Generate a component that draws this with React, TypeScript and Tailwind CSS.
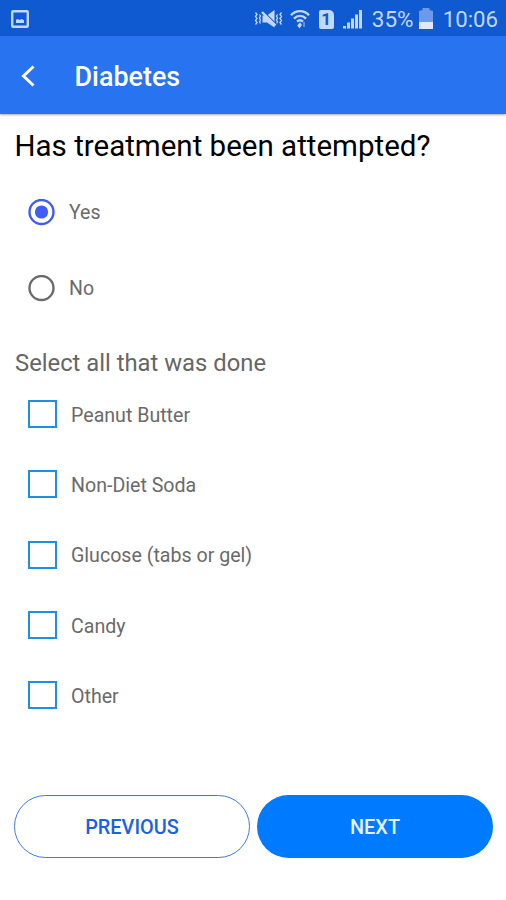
import React, { useState } from "react";

const treatments = [
  "Peanut Butter",
  "Non-Diet Soda",
  "Glucose (tabs or gel)",
  "Candy",
  "Other",
];

const StatusBar: React.FC = () => (
  <div className="flex h-9 items-center bg-[#0f59d1] pl-[11px] pr-[8px] text-[#c3d8fb]">
    <svg className="mt-[2px]" width="18" height="18" viewBox="0 0 18 18" fill="none">
      <rect x="1.2" y="1.2" width="15.6" height="15.6" rx="1" stroke="currentColor" strokeWidth="2.4" />
      <path d="M5 13V9.8l2-.8 1.5 1 2.2-1 2.3 1.2V13z" fill="currentColor" />
    </svg>

    <div className="ml-auto flex items-center pt-[2px]">
      {/* sound off, vibrate */}
      <svg width="29" height="20" viewBox="0 0 29 20" fill="none" stroke="currentColor">
        <path d="M1.5 3.5L3 5.5l-1.5 2L3 9.5l-1.5 2L3 13.5l-1.5 2M5.5 5.5L6.5 7l-1 2 1 2-1 2 1 1.5" strokeWidth="1.3" />
        <path d="M27.5 3.5L26 5.5l1.5 2-1.5 2 1.5 2-1.5 2 1.5 2M23.5 5.5L22.5 7l1 2-1 2 1 2-1 1.5" strokeWidth="1.3" />
        <path d="M8.5 6.500H13l7.500-5.500v17.500L13 13.500H8.500z" fill="currentColor" stroke="none" />
        <path d="M9.500 2.500L23 16" stroke="#0f59d1" strokeWidth="1.2" />
        <path d="M8 3L21.500 16.500" strokeWidth="2.4" />
      </svg>

      {/* wifi */}
      <svg className="ml-[7px]" width="20" height="20" viewBox="0 0 20 20" fill="none" stroke="currentColor" strokeWidth="2.4">
        <path d="M1 6.200C6 .8 14 .8 19 6.200M4 9.600c3.500-3.600 8.500-3.600 12 0M7 12.700c1.800-1.700 4.200-1.700 6 0" />
        <path d="M10 13.300l2 2.700L9.500 19.500l-2.300-3z" fill="currentColor" stroke="none" />
        <path d="M14 13v5" strokeWidth="1.5" opacity="0.6" />
      </svg>

      {/* sim slot */}
      <span className="ml-[9px] flex h-[19px] w-[15px] items-center justify-center rounded-[2px] rounded-tr-[5px] bg-[#c3d8fb] text-[17px] leading-none font-bold text-[#0f59d1]">
        1
      </span>

      {/* mobile signal */}
      <svg className="ml-[9px]" width="20" height="20" viewBox="0 0 20 20" fill="currentColor">
        <path d="M0 17h3v2.500H0zM4 13.500h3v6H4zM8 9.500h3v10H8zM12 5.500h3v14h-3zM16 1h3v18.500h-3z" />
      </svg>

      <span className="ml-[9px] w-[43px] pt-px text-[22.5px] leading-none whitespace-nowrap">35%</span>

      {/* battery */}
      <svg className="ml-[4px] -mt-px" width="14" height="21" viewBox="0 0 14 21">
        <path d="M0 3l3.500-1V0h7v2L14 3v11H0z" fill="#6c9ae9" />
        <path d="M0 14h14v7H0z" fill="#dce8fd" />
      </svg>

      <span className="ml-[10px] pt-px text-[22.2px] leading-none whitespace-nowrap">10:06</span>
    </div>
  </div>
);

type OptionProps = {
  label: string;
  checked: boolean;
  onSelect: () => void;
};

const RadioOption: React.FC<OptionProps> = ({ label, checked, onSelect }) => (
  <button
    type="button"
    role="radio"
    aria-checked={checked}
    onClick={onSelect}
    className="flex h-[76px] items-center pl-[13px] text-[19.5px] text-[#6a6a6a]"
  >
    <svg width="27" height="27" viewBox="0 0 27 27" className={checked ? "text-[#3f5cf5]" : "text-[#6b6b6b]"}>
      <circle cx="13.5" cy="13" r="12" fill="none" stroke="currentColor" strokeWidth="2.4" />
      {checked && <circle cx="13.5" cy="13" r="6.6" fill="currentColor" />}
    </svg>
    <span className="ml-[14px] pt-[2px]">{label}</span>
  </button>
);

const CheckboxOption: React.FC<OptionProps> = ({ label, checked, onSelect }) => (
  <button
    type="button"
    role="checkbox"
    aria-checked={checked}
    onClick={onSelect}
    className="flex h-[70.3px] items-center pl-[13px] text-[19.6px] text-[#6a6a6a]"
  >
    <span
      className={`h-[28px] w-[29px] border-2 border-[#218fdf] ${checked ? "bg-[#218fdf]" : "bg-white"}`}
    />
    <span className="ml-[14px] pt-[3px] whitespace-nowrap">{label}</span>
  </button>
);

const App: React.FC = () => {
  const [attempted, setAttempted] = useState<boolean>(true);
  const [selected, setSelected] = useState<string[]>([]);

  const toggleTreatment = (name: string) => {
    setSelected((prev) =>
      prev.includes(name) ? prev.filter((item) => item !== name) : [...prev, name]
    );
  };

  return (
    <div className="flex h-[900px] w-[506px] flex-col overflow-hidden bg-white font-[Roboto,sans-serif]">
      <StatusBar />
      <header className="flex h-[78px] shrink-0 items-center bg-[#2873ef] pl-[21px] text-white shadow-[0_1px_2px_rgba(0,0,0,0.35)]">
        <button type="button" aria-label="Back" className="pt-[2px]">
          <svg width="14" height="22" viewBox="0 0 14 22" fill="none" stroke="currentColor" strokeWidth="3">
            <path d="M12.5 1.5L2.5 11l10 9.5" />
          </svg>
        </button>
        <h1 className="ml-[39.5px] pt-[4px] text-[26.9px] font-medium">Diabetes</h1>
      </header>

      <main className="flex flex-1 flex-col px-[15px]">
        <h2 className="mt-[12px] -ml-[0.5px] text-[29.5px] leading-[40px] whitespace-nowrap text-black">
          Has treatment been attempted?
        </h2>
        <div role="radiogroup" className="mt-[8px] flex flex-col">
          <RadioOption label="Yes" checked={attempted} onSelect={() => setAttempted(true)} />
          <RadioOption label="No" checked={!attempted} onSelect={() => setAttempted(false)} />
        </div>

        <p className="mt-[17px] text-[23.8px] leading-[40px] text-[#666666]">Select all that was done</p>
        <div className="-mt-[4.2px] flex flex-col">
          {treatments.map((name) => (
            <CheckboxOption
              key={name}
              label={name}
              checked={selected.includes(name)}
              onSelect={() => toggleTreatment(name)}
            />
          ))}
        </div>
      </main>

      <footer className="flex gap-[7px] pb-[42px] pl-[14px] text-[19.9px] font-medium">
        <button type="button" className="h-[63px] w-[236px] rounded-full border border-[#3f78e4] pt-[2px] text-[#1a62e0]">
          PREVIOUS
        </button>
        <button type="button" className="h-[63px] w-[236px] rounded-full bg-[#007aff] pt-[2px] text-[#e6f1ff]">
          NEXT
        </button>
      </footer>
    </div>
  );
};

export default App;
